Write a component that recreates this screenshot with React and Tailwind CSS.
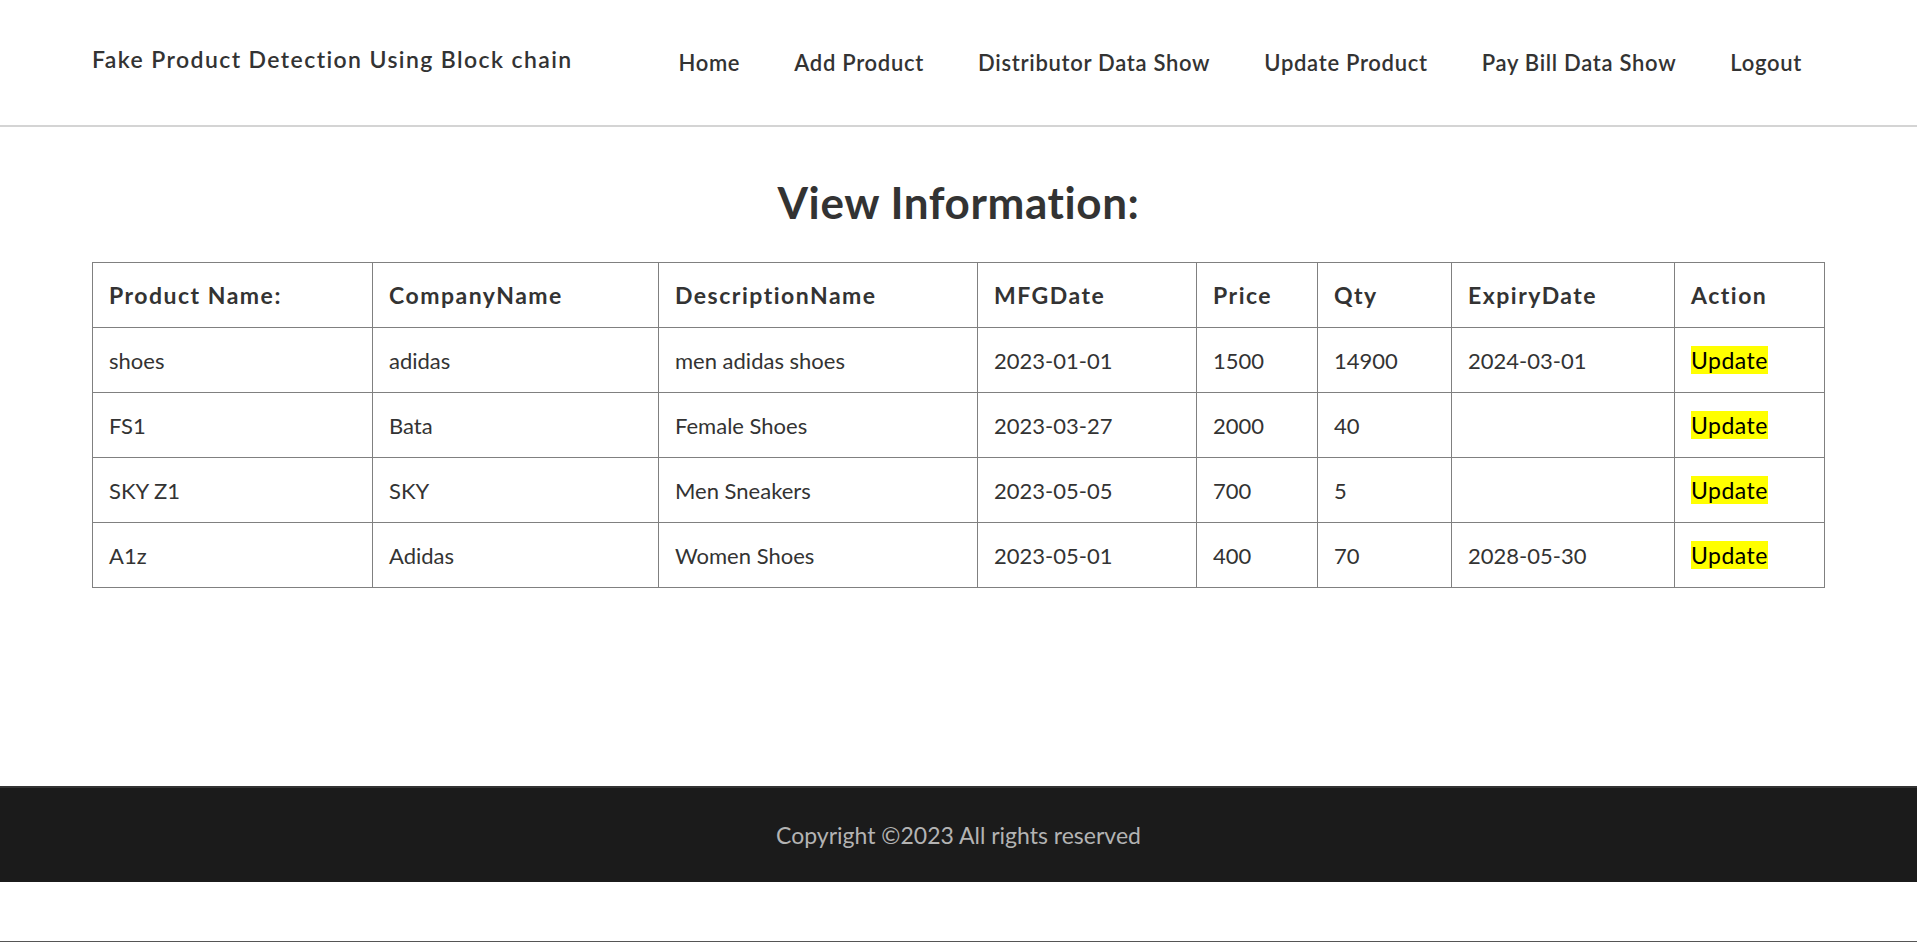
import React from 'react';

const navLinks = ['Home', 'Add Product', 'Distributor Data Show', 'Update Product', 'Pay Bill Data Show', 'Logout'];

const columns = [
  { label: 'Product Name:', width: 'w-[280px]' },
  { label: 'CompanyName', width: 'w-[286px]' },
  { label: 'DescriptionName', width: 'w-[319px]' },
  { label: 'MFGDate', width: 'w-[219px]' },
  { label: 'Price', width: 'w-[121px]' },
  { label: 'Qty', width: 'w-[134px]' },
  { label: 'ExpiryDate', width: 'w-[223px]' },
  { label: 'Action', width: 'w-[150px]' },
];

const products = [
  { name: 'shoes', company: 'adidas', desc: 'men adidas shoes', mfg: '2023-01-01', price: '1500', qty: '14900', expiry: '2024-03-01' },
  { name: 'FS1', company: 'Bata', desc: 'Female Shoes', mfg: '2023-03-27', price: '2000', qty: '40', expiry: '' },
  { name: 'SKY Z1', company: 'SKY', desc: 'Men Sneakers', mfg: '2023-05-05', price: '700', qty: '5', expiry: '' },
  { name: 'A1z', company: 'Adidas', desc: 'Women Shoes', mfg: '2023-05-01', price: '400', qty: '70', expiry: '2028-05-30' },
];

const Header = () => (
  <header className="h-[127px] border-b-2 border-[#d4d4d4] pl-[92px] pr-[88px] flex items-center justify-between">
    <h1 className="text-[23px] tracking-[1.4px] font-semibold text-[#333] -mt-[6px]">Fake Product Detection Using Block chain</h1>
    <nav>
      <ul className="flex items-center">
        {navLinks.map((link) => (
          <li key={link}>
            <a href="#" className="block px-[27px] text-[22px] tracking-[0.7px] font-semibold text-[#333]">
              {link}
            </a>
          </li>
        ))}
      </ul>
    </nav>
  </header>
);

const Cell = ({ children }) => (
  <td className="border border-[#808080] px-4 h-[65px] text-[22px] text-[#333]">
    {children}
  </td>
);

export default function App() {
  return (
    <div className="min-h-[942px] bg-white font-['Lato',sans-serif] flex flex-col">
      <Header />

      {/* View table */}
      <main className="px-[92px] pb-[198px]">
        <h2 className="text-center text-[44px] tracking-[0.6px] font-bold text-[#333] leading-none pt-[53px] pb-[38px]">
          View Information:
        </h2>
        <table className="w-full table-fixed border-collapse text-left">
          <colgroup>
            {columns.map((c) => (
              <col key={c.label} className={c.width} />
            ))}
          </colgroup>
          <thead>
            <tr>
              {columns.map((c) => (
                <th key={c.label} className="border border-[#808080] px-4 h-[65px] text-[23px] tracking-[1.5px] font-bold text-[#333]">
                  {c.label}
                </th>
              ))}
            </tr>
          </thead>
          <tbody>
            {products.map((p) => (
              <tr key={p.name}>
                <Cell>{p.name}</Cell>
                <Cell>{p.company}</Cell>
                <Cell>{p.desc}</Cell>
                <Cell>{p.mfg}</Cell>
                <Cell>{p.price}</Cell>
                <Cell>{p.qty}</Cell>
                <Cell>{p.expiry}</Cell>
                <Cell>
                  <a href="#" className="bg-[#ffff00] text-black text-[23px] tracking-[0.5px]">Update</a>
                </Cell>
              </tr>
            ))}
          </tbody>
        </table>
      </main>

      <footer className="h-[96px] bg-[#1b1b1b] border-t-2 border-[#333] flex items-center justify-center">
        <p className="text-[23px] text-[#b3b3b3]">Copyright ©2023 All rights reserved</p>
      </footer>
      <div className="flex-1 border-b border-[#555]"></div>
    </div>
  );
}
